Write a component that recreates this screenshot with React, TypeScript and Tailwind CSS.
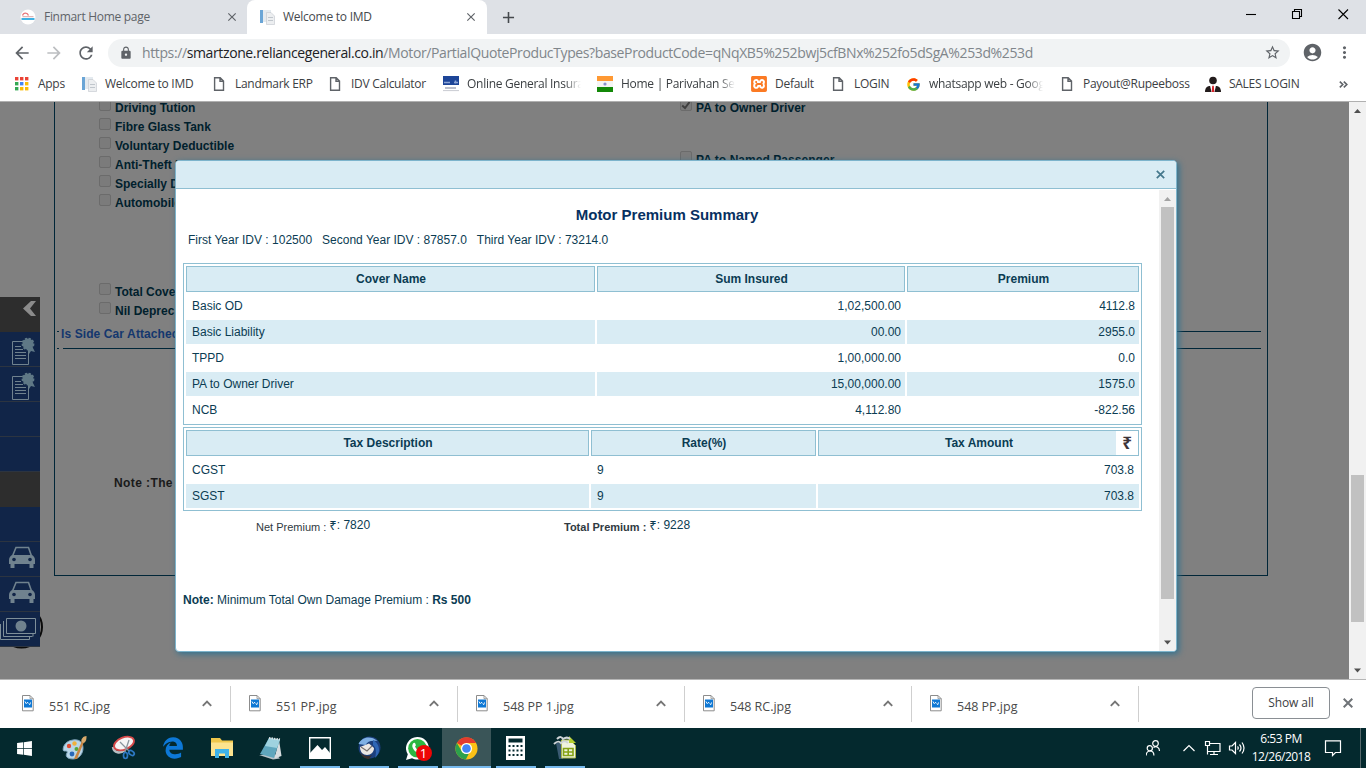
import React from "react";
import { MdArrowBack, MdArrowForward, MdRefresh, MdLock, MdStarBorder, MdAccountCircle, MdMoreVert, MdClose, MdAdd } from "react-icons/md";
import { FcGoogle } from "react-icons/fc";
import { FaEdgeLegacy, FaWindows } from "react-icons/fa6";
import { SiXampp } from "react-icons/si";

/* ---------- small drawings ---------- */

const DocIcon = () => (
  <svg width="16" height="16" viewBox="0 0 16 16" fill="none" stroke="#5f6368" strokeWidth="1.4">
    <path d="M3.6 1.7h5.6l3.3 3.3v9.3H3.6z M9 1.7v3.5h3.5" />
  </svg>
);

const ImdIcon = () => (
  <svg width="16" height="16" viewBox="0 0 16 16">
    <rect x="1" y="1" width="3" height="13" fill="#6aa5d6" />
    <rect x="4" y="1" width="8" height="12" fill="#e4eaef" />
    <path d="M7.500 3.500H12l3.500 3.500v8.500h-8z" fill="#eceef0" stroke="#c8cdd2" strokeWidth=".7" />
    <path d="M9 8.500h5M9 11.500h5" stroke="#c0c6cc" />
  </svg>
);

const AppsIcon = () => (
  <svg width="16" height="16" viewBox="0 0 16 16">
    {["#ea4335", "#ea4335", "#ea4335", "#34a853", "#4285f4", "#fbbc05", "#34a853", "#fbbc05", "#fbbc05"].map((c, i) => (
      <rect key={i} x={1 + (i % 3) * 5} y={1 + Math.floor(i / 3) * 5} width="3.4" height="3.4" fill={c} />
    ))}
  </svg>
);

const HdfcIcon = () => (
  <svg width="16" height="16" viewBox="0 0 16 16">
    <rect width="16" height="9" fill="#1d4598" />
    <path d="M1 6.500h6M11 6.500h4M12.500 4.500v3" stroke="#8ea6d6" strokeWidth="1.500" />
    <path d="M2 12h11" stroke="#8b93a8" strokeWidth="1.200" />
    <path d="M0 14.600h16" stroke="#c9ccd2" />
  </svg>
);

const FlagIcon = () => (
  <svg width="16" height="16" viewBox="0 0 16 16">
    <rect width="16" height="5" fill="#ff9933" />
    <rect y="5" width="16" height="6" fill="#f4f4f4" />
    <rect y="11" width="16" height="5" fill="#138808" />
    <circle cx="8" cy="8" r="1.6" fill="#8890cc" />
  </svg>
);

const PersonIcon = () => (
  <svg width="16" height="16" viewBox="0 0 16 16">
    <circle cx="8" cy="4.5" r="3.8" fill="#231c1c" />
    <path d="M0 16c0-4 2-6 5-6h6c3 0 5 2 5 6z" fill="#231c1c" />
    <path d="M5 9.5h6L9.5 16h-3z" fill="#fff" />
    <path d="M7.2 9.8h1.6L9.3 16H6.7z" fill="#d8232a" />
  </svg>
);

const FinmartIcon = () => (
  <svg width="16" height="16" viewBox="0 0 16 16">
    <circle cx="8" cy="8" r="7.5" fill="#fff" />
    <path d="M2.500 6.500c1-3.500 5-3 6 0" fill="none" stroke="#e8777c" strokeWidth="1.300" />
    <path d="M2.500 7.700h11" stroke="#d9a5a8" strokeWidth="1" />
    <path d="M1.500 10h13" stroke="#3fb1e3" strokeWidth="2" />
  </svg>
);

const JpgIcon = () => (
  <svg width="12" height="17" viewBox="0 0 12 17">
    <path d="M.5.500h7.500l3.200 3.200v12.100H.5z" fill="#fff" stroke="#8c8c8c" />
    <path d="M8 .5v3.200h3.200" fill="none" stroke="#8c8c8c" strokeWidth=".8" />
    <rect x="2" y="4.500" width="8" height="8" fill="#0f78d4" />
    <path d="M3 6.500l1.500 2.500M5.300 7l1 1.500M7.500 10l1-2.500" fill="none" stroke="#fff" strokeWidth="1" />
  </svg>
);

const ChevronUp = () => (
  <svg width="10" height="7" viewBox="0 0 10 7" fill="none" stroke="#757575" strokeWidth="1.9">
    <path d="M.8 5.8L5 1.5l4.2 4.3" />
  </svg>
);

const Arrow = ({ up = false, color = "#505050" }: { up?: boolean; color?: string }) => (
  <svg width="17" height="17" viewBox="0 0 17 17">
    <path d={up ? "M5 11l3.5-4 3.5 4z" : "M5 6.500l3.500 4 3.500-4z"} fill={color} />
  </svg>
);

/* ---------- browser chrome ---------- */

type Bookmark = { icon: React.ReactNode; label: string; width: string; fade?: boolean };

const bookmarks: Bookmark[] = [
  { icon: <AppsIcon />, label: "Apps", width: "w-[67px]" },
  { icon: <ImdIcon />, label: "Welcome to IMD", width: "w-[130px]" },
  { icon: <DocIcon />, label: "Landmark ERP", width: "w-[116px]" },
  { icon: <DocIcon />, label: "IDV Calculator", width: "w-[116px]" },
  { icon: <HdfcIcon />, label: "Online General Insura", width: "w-[154px]", fade: true },
  { icon: <FlagIcon />, label: "Home | Parivahan Sew", width: "w-[154px]", fade: true },
  { icon: <SiXampp size={16} color="#fb7a24" />, label: "Default", width: "w-[79px]" },
  { icon: <DocIcon />, label: "LOGIN", width: "w-[75px]" },
  { icon: <FcGoogle size={15} />, label: "whatsapp web - Goog", width: "w-[154px]", fade: true },
  { icon: <DocIcon />, label: "Payout@Rupeeboss", width: "w-[146px]" },
  { icon: <PersonIcon />, label: "SALES LOGIN", width: "w-[134px]" },
];

const TabStrip = () => (
  <div className="flex h-[34px] bg-[#dee1e6] text-[12px] tracking-[-0.25px]">
    <div className="flex w-[247px] items-center pl-5 text-[#5f6368]">
      <FinmartIcon />
      <span className="ml-2 grow tracking-[-0.3px]">Finmart Home page</span>
      <MdClose size={14} className="mr-2" />
    </div>
    <div className="flex w-60 items-center rounded-t-lg bg-white pl-3 text-[#45494d]">
      <ImdIcon />
      <span className="ml-2 grow">Welcome to IMD</span>
      <MdClose size={14} className="mr-[9px] text-[#5f6368]" />
    </div>
    <div className="flex grow items-center pl-3 text-[#45494d]">
      <MdAdd size={19} />
    </div>
    <svg className="mr-[15px] mt-2" width="106" height="14" viewBox="0 0 106 14" fill="none" stroke="#000" strokeWidth="1.1">
      <path d="M1 6.5h10" />
      <path d="M47.5 3.5h7v7h-7z M49.5 3.5v-2h7v7h-2" />
      <path d="M93.5 1.500l9.500 9.500M103 1.500l-9.500 9.500" />
    </svg>
  </div>
);

const Toolbar = () => (
  <div className="flex h-[33px] items-center bg-white text-[#5f6368]">
    <MdArrowBack size={20} className="ml-3 mt-1" />
    <MdArrowForward size={20} className="ml-3 mt-1 text-[#bcbec1]" />
    <MdRefresh size={20} className="ml-3 mt-1" />
    <div className="ml-3 mt-1 flex h-7 w-[1182px] items-center rounded-full bg-[#f1f3f4] pl-[11px] pr-[9px]">
      <MdLock size={14} />
      <div className="ml-[9px] grow whitespace-nowrap text-[14px] tracking-[-0.38px] text-[#80868b]">
        https://<span className="text-[#202124]">smartzone.reliancegeneral.co.in</span>
        /Motor/PartialQuoteProducTypes?baseProductCode=qNqXB5%252bwj5cfBNx%252fo5dSgA%253d%253d
      </div>
      <MdStarBorder size={17} />
    </div>
    <MdAccountCircle size={21} className="ml-3 mt-1" />
    <MdMoreVert size={19} className="ml-3 mt-1" />
  </div>
);

const BookmarksBar = () => (
  <div className="flex h-[35px] items-center border-b border-[#b0b0b0] bg-white pl-3.5 text-[12px] tracking-[-0.28px] text-[#3c4043]">
    {bookmarks.map((b) => (
      <div key={b.label} className={`flex shrink-0 items-center gap-2 ${b.width}`}>
        <span className="flex w-4 shrink-0 justify-center">{b.icon}</span>
        {b.fade ? (
          <span className="w-[114px] whitespace-nowrap [mask-image:linear-gradient(to_right,black_86%,transparent)]">{b.label}</span>
        ) : (
          <span className="whitespace-nowrap">{b.label}</span>
        )}
      </div>
    ))}
    <svg width="9" height="7" viewBox="0 0 9 7" fill="none" stroke="#5f6368" strokeWidth="1.6">
      <path d="M.8.6l3 2.9-3 2.9M4.8.6l3 2.9-3 2.9" />
    </svg>
  </div>
);

/* ---------- page behind the dialog ---------- */

const Check = ({ label, checked = false }: { label: string; checked?: boolean }) => (
  <div className="flex h-[19px] items-center gap-1">
    <span className="mb-[5px] flex size-3 items-center justify-center rounded-[2px] border border-[#6b6b6b] bg-[#7b7b7b]">
      {checked && (
        <svg width="10" height="9" viewBox="0 0 10 9" fill="none" stroke="#404040" strokeWidth="2">
          <path d="M1.2 4.5L4 7l4.6-6" />
        </svg>
      )}
    </span>
    <span className="whitespace-nowrap">{label}</span>
  </div>
);

const CertIcon = () => (
  <svg width="26" height="28" viewBox="0 0 26 28">
    <path d="M2.500 4.500h16v23h-16z" fill="none" stroke="#70828e" />
    <path d="M5 9.500h6M5 12.500h8M5 15.500h11M5 18.500h11M5 21.500h11" stroke="#70828e" />
    <circle cx="18" cy="7" r="5.500" fill="#5f7886" stroke="#5f7886" strokeWidth="1.800" strokeDasharray="2.200 1.500" />
    <path d="M18 12l1 5 2-3 4 1-3-6z" fill="#5f7886" />
  </svg>
);

const CarIcon = () => (
  <svg width="28" height="24" viewBox="0 0 28 24">
    <path d="M4.500 11L8 2.500h12.500L23.500 11" fill="none" stroke="#70828e" strokeWidth="1.600" />
    <path d="M4 10h20c2 1 3 3 3 5v4h-1.500v4h-4v-4h-15v4h-4v-4H1v-4c0-2 1-4 3-5z" fill="#70828e" />
    <circle cx="6" cy="14.500" r="1.800" fill="#112548" />
    <circle cx="22" cy="14.500" r="1.800" fill="#112548" />
  </svg>
);

const CashIcon = () => (
  <svg width="37" height="24" viewBox="0 0 37 24" fill="none" stroke="#7e8f99">
    <path d="M6.500 1.500h29v15h-29z" />
    <path d="M3.500 4v15.500h29M33 17v2.500M.5 7v15.500h29V20" />
    <circle cx="21" cy="9" r="5.500" fill="#70828e" stroke="none" />
  </svg>
);

const sidebar: { dark?: boolean; icon?: React.ReactNode; justify?: string }[] = [
  { icon: <CertIcon />, justify: "justify-end pr-1 pt-[3px]" },
  { icon: <CertIcon />, justify: "justify-end pr-1 pt-[3px]" },
  {},
  {},
  { dark: true },
  {},
  { icon: <CarIcon />, justify: "justify-end pr-1 pb-[5px]" },
  { icon: <CarIcon />, justify: "justify-end pr-1 pb-[5px]" },
  { icon: <CashIcon />, justify: "justify-start" },
];

const Page = () => (
  <div className="flex h-full grow bg-[#808080] text-[12px] font-bold text-[#00202d]">
    <div className="relative mt-[195px] h-[354px] w-10 shrink-0">
      <svg className="absolute left-0 top-[308px]" width="44" height="44" viewBox="0 0 44 44">
        <circle cx="21.500" cy="22" r="20.500" fill="none" stroke="#0a0a0a" strokeWidth="2" />
      </svg>
      <div className="relative flex flex-col">
        <div className="flex h-[35px] justify-end bg-[#2d2d2d] pr-1 pt-1">
          <svg width="13" height="15" viewBox="0 0 13 15">
            <path d="M8 0h5L7 7.500l6 7.500H8L0 7.500z" fill="#8b8b8b" />
          </svg>
        </div>
        {sidebar.map((s, i) => (
          <div
            key={i}
            className={`flex h-[35px] items-center border-b ${s.dark ? "border-[#2d2d2d] bg-[#2d2d2d]" : "border-[#2c3440] bg-[#112548]"} ${s.justify ?? ""}`}
          >
            {s.icon}
          </div>
        ))}
      </div>
    </div>
    <div className="ml-3.5 flex h-[474px] w-[1214px] shrink-0 flex-col overflow-hidden border-x border-b border-[#002638] px-0.5">
      <div className="-mt-1 flex h-[224px] pl-[42px]">
        <div className="flex w-[581px] flex-col">
          <Check label="Driving Tution" />
          <Check label="Fibre Glass Tank" />
          <Check label="Voluntary Deductible" />
          <Check label="Anti-Theft Device" />
          <Check label="Specially Designed" />
          <Check label="Automobile" />
          <div className="mt-[70px]">
            <Check label="Total Cover" />
            <Check label="Nil Deprec" />
          </div>
        </div>
        <div className="flex flex-col tracking-[0.05px]">
          <Check label="PA to Owner Driver" checked />
          <div className="mt-[33px]">
            <Check label="PA to Named Passenger" />
          </div>
        </div>
      </div>
      <div className="mt-px flex h-[26px] w-[1204px] flex-col">
        <div className="flex h-[20px] items-center text-[#14376e]">
          <span className="mb-[3px] h-px w-0.5 bg-[#002638]" />
          <span className="ml-0.5 mt-0.5 whitespace-nowrap tracking-[0.1px]">Is Side Car Attached</span>
          <span className="mb-[3px] h-px grow bg-[#002638]" />
        </div>
        <div className="mt-[5px] flex h-px gap-1">
          <span className="w-0.5 bg-[#002638]" />
          <span className="grow bg-[#002638]" />
        </div>
      </div>
      <p className="ml-[57px] mt-[125px] tracking-[0.4px] text-[#1a1a1a]">Note :The</p>
    </div>
  </div>
);

/* ---------- dialog ---------- */

const covers = [
  ["Basic OD", "1,02,500.00", "4112.8"],
  ["Basic Liability", "00.00", "2955.0"],
  ["TPPD", "1,00,000.00", "0.0"],
  ["PA to Owner Driver", "15,00,000.00", "1575.0"],
  ["NCB", "4,112.80", "-822.56"],
];

const taxes = [
  ["CGST", "9", "703.8"],
  ["SGST", "9", "703.8"],
];

const head = "flex h-[26px] items-center justify-center border border-[#8fbfd2] bg-[#d9ecf4] pl-px font-bold";

const Rupee = () => <span className="font-['Noto_Sans',sans-serif] text-[13px] leading-4">₹</span>;

const Dialog = () => (
  <div className="absolute left-[175px] top-[58px] flex h-[492px] w-[1002px] flex-col overflow-hidden rounded-[4px] border border-[#7db4cc] bg-white text-[12px] text-[#0b3c53] shadow-[2px_2px_6px_#2f7291]">
    <div className="flex h-7 shrink-0 items-center justify-end border-b border-[#8fbfd2] bg-[#d9ecf4] pr-[11px]">
      <svg width="9" height="9" viewBox="0 0 9 9" stroke="#45788c" strokeWidth="1.700">
        <path d="M.8.8l7.400 7.400M8.200.8L.8 8.200" />
      </svg>
    </div>
    <div className="flex min-h-0 grow pt-px">
      <div className="w-[983px] shrink-0 pl-[7px] pt-[15px]">
        <h1 className="w-[968px] text-center text-[15px] font-bold leading-5 text-[#073061]">Motor Premium Summary</h1>
        <div className="mt-[7px] flex h-4 items-center gap-2.5 pl-[5px]">
          <span>First Year IDV : 102500</span>
          <span>Second Year IDV : 87857.0</span>
          <span>Third Year IDV : 73214.0</span>
        </div>

        <div className="mt-[15px] grid w-[959px] grid-cols-[409px_308px_232px] gap-0.5 border border-[#8fbfd2] p-0.5">
          {["Cover Name", "Sum Insured", "Premium"].map((h) => (
            <div key={h} className={head}>{h}</div>
          ))}
          {covers.map((row, r) =>
            row.map((cell, c) => (
              <div key={`${r}-${c}`} className={`flex h-6 items-center ${c ? "justify-end pr-1" : "pl-1.5"} ${r % 2 ? "bg-[#d9ecf4]" : ""}`}>
                {cell}
              </div>
            ))
          )}
        </div>

        <div className="mt-0.5 grid w-[959px] grid-cols-[403px_225px_321px] gap-0.5 border border-[#8fbfd2] p-0.5">
          <div className={head}>Tax Description</div>
          <div className={head}>Rate(%)</div>
          <div className={head}>
            <span className="grow pl-[22px] text-center">Tax Amount</span>
            <span className="flex h-6 w-[22px] items-center justify-center bg-white font-['Noto_Sans',sans-serif] text-[17px] text-[#3c3438]">₹</span>
          </div>
          {taxes.map((row, r) =>
            row.map((cell, c) => (
              <div key={`${r}-${c}`} className={`flex h-6 items-center ${c === 2 ? "justify-end pr-[5px]" : "pl-1.5"} ${r % 2 ? "bg-[#d9ecf4]" : ""}`}>
                {cell}
              </div>
            ))
          )}
        </div>

        <div className="mt-1.5 flex h-5 pl-[73px] leading-4">
          <div className="flex w-[308px] gap-[3px]">
            <span className="mt-0.5 text-[11px] text-[#303a42]">Net Premium :</span>
            <span className="flex"><Rupee />: 7820</span>
          </div>
          <div className="flex gap-[3px]">
            <span className="mt-0.5 text-[11px] font-bold text-[#303a42]">Total Premium :</span>
            <span className="flex"><Rupee />: 9228</span>
          </div>
        </div>

        <p className="mt-[54px]">
          <b>Note:</b> Minimum Total Own Damage Premium : <b>Rs 500</b>
        </p>
      </div>
      <div className="flex w-[17px] shrink-0 flex-col items-center bg-[#f1f1f1]">
        <Arrow up color="#a3a3a3" />
        <div className="h-[392px] w-[13px] bg-[#c1c1c1]" />
        <div className="grow" />
        <Arrow />
      </div>
    </div>
  </div>
);

/* ---------- download shelf ---------- */

const Downloads = () => (
  <div className="flex h-[49px] border-t border-[#b6b6b6] bg-white text-[12px] text-[#4a4a4a]">
    {["551 RC.jpg", "551 PP.jpg", "548 PP 1.jpg", "548 RC.jpg", "548 PP.jpg"].map((f, i) => (
      <div key={f} className={`mt-1.5 flex h-9 items-center border-r border-[#cfcfcf] pr-[18px] ${i ? "w-[227px] pl-[18px]" : "w-[231px] pl-[22px]"}`}>
        <span className="mb-0.5"><JpgIcon /></span>
        <span className="ml-[15px] mt-1.5 grow text-[12.5px] tracking-[-0.02px]">{f}</span>
        <span className="mb-px"><ChevronUp /></span>
      </div>
    ))}
    <div className="grow" />
    <button className="mt-[7px] h-8 w-[78px] rounded-[4px] border border-[#8a8f94] text-[12px] tracking-[-0.1px] text-[#3c4043]">Show all</button>
    <svg className="ml-[13px] mr-[13px] mt-[18px]" width="10" height="10" viewBox="0 0 10 10" stroke="#6f7377" strokeWidth="2">
      <path d="M.7.7l8.600 8.600M9.300.7L.7 9.300" />
    </svg>
  </div>
);

/* ---------- taskbar ---------- */

const Paint = () => (
  <svg width="26" height="26" viewBox="0 0 26 26">
    <path d="M11 5c6-1 10 2 10 8s-4 11-10 11-8-3-6-6c1-2-1-2-3-2-2 0-1-10 9-11z" fill="#b9d6e8" stroke="#7fa3bb" />
    <circle cx="7" cy="11" r="2.200" fill="#e04b33" />
    <circle cx="12.500" cy="8.500" r="2.200" fill="#f0b13c" />
    <circle cx="14.500" cy="14" r="2" fill="#55a63b" />
    <circle cx="10" cy="19" r="2.400" fill="#2a68b8" />
    <path d="M12 24L20 6l2 1-7 17z" fill="#c98643" />
    <path d="M19.500 7c-1-3 2-6 5-6 0 3 0 5-2.500 7z" fill="#d9aa6c" />
  </svg>
);

const Snip = () => (
  <svg width="26" height="26" viewBox="0 0 26 26">
    <path d="M2 12c1 6 7 7 12 3" fill="none" stroke="#b8bfc4" strokeWidth="2.500" />
    <ellipse cx="13" cy="8.500" rx="10.500" ry="6" transform="rotate(-22 13 8.500)" fill="#f5f5f5" stroke="#d54a4a" strokeWidth="1.800" />
    <path d="M9 7l9 9M18 5l-4 12" stroke="#8a949c" strokeWidth="1.300" />
    <ellipse cx="14.500" cy="20.500" rx="2" ry="3" fill="none" stroke="#2d78c4" strokeWidth="1.700" />
    <ellipse cx="20.500" cy="18" rx="3" ry="2" transform="rotate(35 20.500 18)" fill="none" stroke="#2d78c4" strokeWidth="1.700" />
  </svg>
);

const Explorer = () => (
  <svg width="22" height="22" viewBox="0 0 22 22">
    <path d="M0 1h9l2 2.500h11v15H0z" fill="#f0c74b" />
    <path d="M0 5.500h22v13.500H0z" fill="#fde38e" />
    <path d="M4 12h14v9h-4v-4.500H8V21H4z" fill="#3fb3ea" />
  </svg>
);

const Notepad = () => (
  <svg width="24" height="26" viewBox="0 0 24 26">
    <path d="M0 20l14 4.500 7-1-4-4z" fill="#b9c4ca" />
    <path d="M20 5l2.500 16-7 2.500z" fill="#d7dde0" />
    <path d="M10 3l11 1.500-6 18.500L1 19z" fill="#5fa6bd" />
    <path d="M10 3l11 1.500L18 13 6 11z" fill="#9fd2df" />
    <path d="M10 3l11 1.500" stroke="#dce2e4" strokeWidth="2" strokeDasharray="1.500 1" />
  </svg>
);

const Photos = () => (
  <svg width="22" height="22" viewBox="0 0 22 22">
    <path d="M.7.7h20.600v20.600H.7z" fill="none" stroke="#fff" strokeWidth="1.400" />
    <path d="M1 16l7.500-8 4.500 5 3-3 5 6v5H1z" fill="#fff" />
  </svg>
);

const Thunderbird = () => (
  <svg width="24" height="24" viewBox="0 0 24 24">
    <circle cx="12.500" cy="11.500" r="11" fill="#1c3f7c" />
    <path d="M1.500 8c3-7 12-9 19-3-6-1-10 0-12 4z" fill="#7fb0e4" />
    <path d="M16 4c6 3 9 12 2 18 1-4 2-10-2-13z" fill="#2f66b5" />
    <path d="M3 11l9-3.500 5 4.500c0 4-3 7-7 7s-7-3-7-8z" fill="#ece8e4" />
    <path d="M4 11l6 4 5-5" fill="none" stroke="#77706c" strokeWidth="1.100" />
    <path d="M3 16c3 4 8 5 12 3l-3 4c-4 0-7-2-9-7z" fill="#3c2f2c" />
  </svg>
);

const Chrome = () => (
  <svg width="23" height="23" viewBox="0 0 24 24">
    <circle cx="12" cy="12" r="11.500" fill="#fbc116" />
    <path d="M2 6.200A11.500 11.500 0 0 1 22 6.200H12A5.800 5.800 0 0 0 7 9.100z" fill="#e33b2e" />
    <path d="M2 6.200l5 8.700a5.800 5.800 0 0 0 7.500 2.300L11.300 23.500A11.500 11.500 0 0 1 2 6.200z" fill="#2ca14c" />
    <circle cx="12" cy="12" r="5.800" fill="#fff" />
    <circle cx="12" cy="12" r="4.500" fill="#4285f4" />
  </svg>
);

const WhatsApp = () => (
  <span className="relative flex size-6 items-center justify-center">
    <svg width="23" height="23" viewBox="0 0 23 23" className="absolute">
      <path d="M11.500 0a11.300 11.300 0 0 1 0 22.600c-2 0-4-.5-5.500-1.400L0 23l1.800-5.700A11.300 11.300 0 0 1 11.500 0z" fill="#fff" />
      <circle cx="11.500" cy="11.300" r="9.300" fill="#2cb742" />
      <path d="M7 6.500c1-1 2-1 2.500.5s.5 1.500-.5 2.500c1 2 2 3 4 4 1-1 1-1.500 2.500-.5s1.500 1.500.5 2.500c-5 3-12-5-9-9z" fill="#fff" />
    </svg>
    <span className="absolute -right-0.5 top-[9px] flex size-4 items-center justify-center rounded-full bg-[#ee0505] text-[13px] leading-none text-white">1</span>
  </span>
);

const Calculator = () => (
  <svg width="19" height="24" viewBox="0 0 19 24">
    <path d="M0 0h19v24H0z" fill="#fff" />
    <path d="M2.500 2.500h14v4h-14z" fill="#04292e" />
    {[9, 13.5, 18].map((y) => [2.5, 6.500, 10.500, 14.500].map((x) => <rect key={`${x}-${y}`} x={x} y={y} width="2" height="2" fill="#04292e" />))}
  </svg>
);

const OfficeCalc = () => (
  <svg width="24" height="24" viewBox="0 0 24 24">
    <path d="M3 7h7v16H6z" fill="#3a5a72" />
    <path d="M8.500 4h8.500l5.500 5.500V22h-14z" fill="#eff3dd" stroke="#a7b64a" />
    <path d="M16 0l7 7h-7z" fill="#b4cf2d" />
    <path d="M10.500 12.500h9.500v7h-9.500zM15.200 12.500v7M10.500 16H20" fill="none" stroke="#86a313" strokeWidth="1.600" />
    <path d="M1 8c3-3 5-3 7-1 2-2 5-2 7 0M4 3c3-3 5-2 6 0 3-2 5-2 7 0" fill="none" stroke="#d0d5d8" strokeWidth="2" />
  </svg>
);

const tasks: { icon: React.ReactNode; open?: boolean; active?: boolean }[] = [
  { icon: <FaWindows size={17} color="#fff" /> },
  { icon: <Paint /> },
  { icon: <Snip /> },
  { icon: <FaEdgeLegacy size={22} color="#0d78d7" /> },
  { icon: <Explorer /> },
  { icon: <Notepad /> },
  { icon: <Photos />, open: true },
  { icon: <Thunderbird />, open: true },
  { icon: <WhatsApp />, open: true },
  { icon: <Chrome />, open: true, active: true },
  { icon: <Calculator />, open: true },
  { icon: <OfficeCalc />, open: true },
];

const Taskbar = () => (
  <div className="flex h-10 bg-[#04292e] text-white">
    {tasks.map((t, i) => (
      <div key={i} className={`flex shrink-0 flex-col items-center ${i ? "w-[49px]" : "w-[50px] pr-0.5"} ${t.active ? "bg-[#3a5558]" : ""}`}>
        <div className="flex h-[38px] items-center pt-0.5">{t.icon}</div>
        {t.open && <div className={`h-0.5 bg-[#76b9ed] ${t.active ? "w-full" : "w-10"}`} />}
      </div>
    ))}
    <div className="grow" />
    <svg className="mt-3" width="100" height="18" viewBox="0 0 100 18" fill="none" stroke="#fff" strokeWidth="1.200">
      <circle cx="3.800" cy="8.300" r="2.600" />
      <path d="M.2 15.500c0-6 7.700-6 7.700 0" />
      <circle cx="9.500" cy="3.500" r="2.800" />
      <path d="M7.500 7.500c3-2 6 0 6 3.500" />
      <path d="M37.500 11l5.500-5.500 5.500 5.500" />
      <path d="M63 3.500h11v8H61.500M64 14.500h8M68 11.500v3M59.500 1.500h4v4h-4zM61.500 5.500v9" />
      <path d="M83.500 6h2.500l3.500-3.500v11L86 10h-2.500z" />
      <path d="M91.500 6.500q1.500 1.500 0 3M93.500 4.500q3 3.500 0 7M96 2.500q4 5.500 0 11" />
    </svg>
    <div className="ml-1 flex w-[62px] flex-col items-center pt-0.5 text-[12px] leading-[18px] tracking-[-0.5px]">
      <span>6:53 PM</span>
      <span>12/26/2018</span>
    </div>
    <svg className="ml-3 mt-3" width="18" height="17" viewBox="0 0 18 17" fill="none" stroke="#fff" strokeWidth="1.200">
      <path d="M1.500.8h15v11.700h-5L8.500 15.500v-3h-7z" />
    </svg>
    <div className="ml-[18px] mr-[5px] w-px bg-[#56696c]" />
  </div>
);

export default function App() {
  return (
    <div className="flex h-[768px] w-[1366px] flex-col overflow-hidden font-['Open_Sans',sans-serif]">
      <TabStrip />
      <Toolbar />
      <BookmarksBar />
      <main className="relative flex h-[577px] overflow-hidden font-['Liberation_Sans',Arial,sans-serif]">
        <Page />
        <div className="flex w-[17px] shrink-0 flex-col items-center bg-[#f1f1f1]">
          <Arrow up />
          <div className="mt-[356px] h-[147px] w-[13px] bg-[#c1c1c1]" />
          <div className="grow" />
          <Arrow />
        </div>
        <Dialog />
      </main>
      <Downloads />
      <Taskbar />
    </div>
  );
}
